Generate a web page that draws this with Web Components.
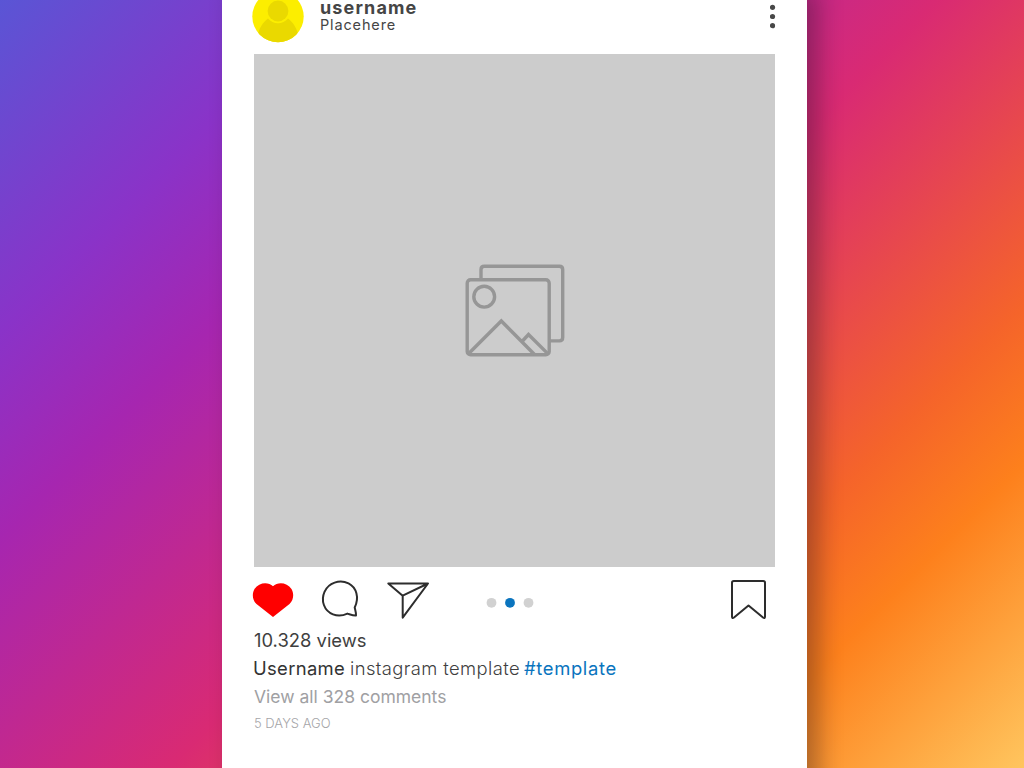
<!DOCTYPE html>
<html lang="en">
<head>
<meta charset="utf-8">
<title>Post template</title>
<style>
html,body{margin:0;height:100%;overflow:hidden}
body{font-family:Inter,"Liberation Sans",sans-serif}
</style>
</head>
<body>
<post-stage>
  <post-card>
    <post-header slot="header"><span slot="name">username</span><span slot="place">Placehere</span></post-header>
    <post-media slot="media"></post-media>
    <post-actions slot="actions"></post-actions>
    <post-caption slot="caption">
      <span slot="views">10.328 views</span>
      <span slot="author">Username</span>
      <span slot="text">instagram template</span>
      <span slot="tag">#template</span>
      <span slot="comments">View all 328 comments</span>
      <span slot="time">5 DAYS AGO</span>
    </post-caption>
  </post-card>
</post-stage>
<script>
const define = (name, html) => {
  const t = document.createElement('template');
  t.innerHTML = html;
  customElements.define(name, class extends HTMLElement {
    constructor() {
      super();
      this.attachShadow({mode: 'open'}).append(t.content.cloneNode(true));
    }
  });
};

define('post-stage', `
<style>
:host{display:flex;width:1024px;height:768px;overflow:hidden;box-sizing:border-box;padding-left:222px;
background:linear-gradient(135deg,#5a55d5 0,#8a33c8 18.6%,#a626b0 30%,#d92a73 52.3%,#f5642a 74.2%,#fd801c 83%,#ffc55e 100%)}
</style><slot></slot>`);

define('post-card', `
<style>
:host{display:flex;flex-direction:column;box-sizing:border-box;width:585px;height:868px;margin-top:-30px;padding:30px 32px 0;
background:#fff;box-shadow:12px 20px 22px rgba(20,15,30,.33)}
</style><slot name="header"></slot><slot name="media"></slot><slot name="actions"></slot><slot name="caption"></slot>`);

define('post-header', `
<style>
:host{display:flex;height:53.6px;color:#454545}
.avatar{display:block;width:52px;height:43px;margin-left:-2px;flex:none}
.id{margin-left:16px;flex:1;display:flex;flex-direction:column}
.name{font-weight:700;font-size:18px;line-height:20px;letter-spacing:1.15px;margin-top:-2px}
.place{font-size:14.5px;line-height:16px;letter-spacing:.85px;font-weight:400;margin-top:-1px}
.menu{width:7px;height:32px;flex:none;margin-right:-2px}
</style>
<svg class="avatar" viewBox="0 0 52 43"><defs><clipPath id="c"><circle cx="26" cy="16.5" r="25.7"/></clipPath></defs>
<g clip-path="url(#c)"><rect y="-10" width="52" height="54" fill="#fcee00"/><circle cx="26" cy="11" r="10.4" fill="#ead900"/>
<path d="M5.5 36C7 28 11 22 16 18.4C21 24.8 31 24.8 36 18.4C41 22 45 28 46.5 36V45H5.5Z" fill="#ead900"/></g></svg>
<div class="id"><div class="name"><slot name="name"></slot></div><div class="place"><slot name="place"></slot></div></div>
<svg class="menu" viewBox="0 0 7 32" fill="#484848"><circle cx="2.5" cy="7.3" r="2.6"/><circle cx="2.5" cy="16.5" r="2.6"/><circle cx="2.5" cy="25.7" r="2.6"/></svg>`);

define('post-media', `
<style>
:host{display:flex;height:513.4px;background:#ccc}
svg{width:521px;height:513px}
</style>
<svg viewBox="254 54 521 513" fill="none" stroke="#969696" stroke-width="3.4" stroke-linejoin="round">
<rect x="467.2" y="279.8" width="82" height="75" rx="3.4"/>
<path d="M481 279.5V269.500Q481 266.200 484.300 266.200H559.400Q562.700 266.200 562.700 269.500V337.500Q562.700 340.900 559.400 340.900H550"/>
<circle cx="484.200" cy="296.700" r="10.400"/>
<path d="M468.500 353.700L501.300 321L534.500 354.500M522.500 341L528.500 334.500L548 353.900" stroke-linejoin="miter"/>
</svg>`);

define('post-actions', `
<style>
:host{display:flex;height:58px}
svg{width:523px;height:58px;margin-left:-2px;flex:none}
</style>
<svg viewBox="252 567 523 58" fill="none" stroke="#2d2d2d" stroke-width="2" stroke-linejoin="round" stroke-linecap="round">
<path d="M273 617L256.500 604C252 600 252 593 254.500 589C259 582 268.500 581.500 273 586.300C277.500 581.500 287 582 291.500 589C294 593 294 600 289.500 604Z" fill="#f00" stroke="none"/>
<path d="M354.700 607.500C359.500 597.500 356.500 587.500 348.500 583.400C339.500 579 328.500 583 324.500 591.800C320.600 600.500 324 610.800 333 614.400C338.200 616.400 343 615.700 347.400 613.600C350 614.300 353 615.600 356 615.400C356.200 612.500 355.300 610.500 354.700 607.500Z"/>
<path d="M388.300 583.500H428L402.700 617.600V595.700ZM402.700 595.700L428 583.500"/>
<g stroke="none"><circle cx="491.500" cy="602.800" r="4.900" fill="#d1d1d1"/><circle cx="510" cy="602.800" r="4.900" fill="#0a74be"/><circle cx="528.500" cy="602.800" r="4.900" fill="#d1d1d1"/></g>
<path d="M733.800 581H763.200Q765 581 765 582.800V616.500Q765 619 763 617.500L748.500 605.500L734 617.500Q732 619 732 616.500V582.800Q732 581 733.800 581Z"/>
</svg>`);

define('post-caption', `
<style>
:host{display:flex;flex-direction:column;color:#3f3f3f;font-size:18.400px;line-height:30px;white-space:nowrap}
.views{height:28px}
.line{display:flex;gap:5px;height:29px;line-height:30px;margin-left:-1px}
.author{font-weight:400;width:92px;letter-spacing:.35px;color:#333}
.text{font-weight:300;width:169px;letter-spacing:.4px}
.tag{color:#0a74be;letter-spacing:.65px}
.comments{color:#a0a0a3;height:29px;font-size:17.500px}
.time{color:#a5a5a8;font-size:13px;font-weight:300;line-height:24px}
</style>
<div class="views"><slot name="views"></slot></div>
<div class="line"><span class="author"><slot name="author"></slot></span><span class="text"><slot name="text"></slot></span><span class="tag"><slot name="tag"></slot></span></div>
<div class="comments"><slot name="comments"></slot></div>
<div class="time"><slot name="time"></slot></div>`);
</script>
</body>
</html>
